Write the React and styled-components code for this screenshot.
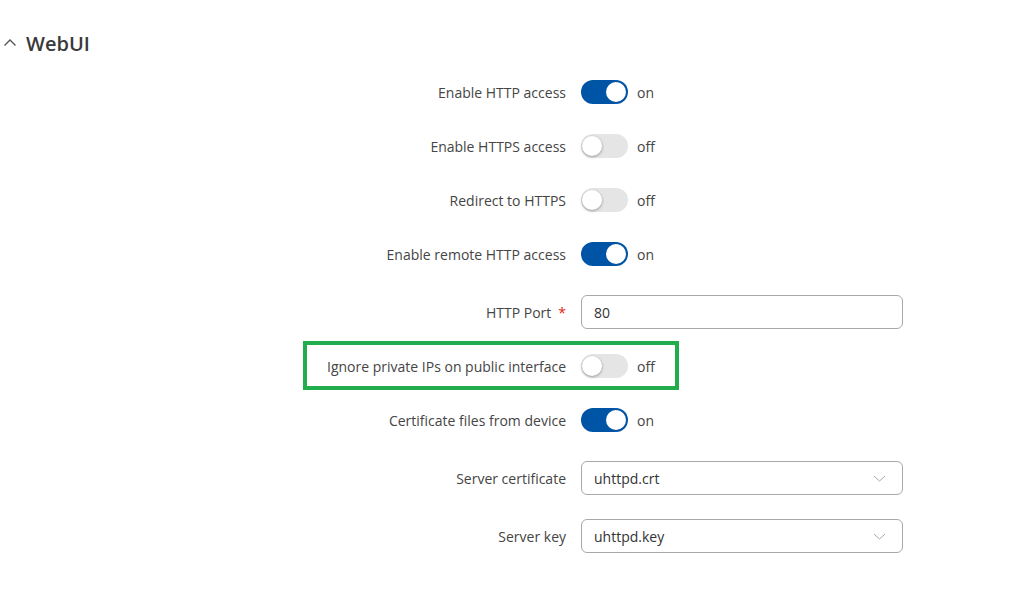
import React from "react";
import styled, { createGlobalStyle } from "styled-components";

const GlobalStyle = createGlobalStyle`
  html, body {
    margin: 0;
    padding: 0;
    background: #ffffff;
  }
  body {
    font-family: "Open Sans", "Noto Sans", sans-serif;
    color: #404040;
  }
`;

const rows = [
  { type: "toggle", label: "Enable HTTP access", on: true, space: 25 },
  { type: "toggle", label: "Enable HTTPS access", on: false, space: 30 },
  { type: "toggle", label: "Redirect to HTTPS", on: false, space: 30 },
  { type: "toggle", label: "Enable remote HTTP access", on: true, space: 30 },
  { type: "input", label: "HTTP Port", value: "80", required: true, space: 29 },
  { type: "toggle", label: "Ignore private IPs on public interface", on: false, space: 25, marked: true },
  { type: "toggle", label: "Certificate files from device", on: true, space: 30 },
  { type: "select", label: "Server certificate", value: "uhttpd.crt", space: 29 },
  { type: "select", label: "Server key", value: "uhttpd.key", space: 24 },
];

const App = () => {
  return (
    <>
      <GlobalStyle />
      <Page>
        <Header>
          <svg width="14" height="9" viewBox="0 0 14 9">
            <polyline points="1.5,7.5 7,2 12.5,7.5" fill="none" stroke="#555" strokeWidth="1.4" />
          </svg>
          <Title>WebUI</Title>
        </Header>
        <Form>
          {rows.map((r) => (
            <Row key={r.label} $space={r.space}>
              {r.marked && <Marker />}
              <Label>
                {r.label}
                {r.required && <Required>*</Required>}
              </Label>
              <Control>
                {r.type === "toggle" && (
                  <>
                    <Switch $on={r.on}>
                      <Knob $on={r.on} />
                    </Switch>
                    <State>{r.on ? "on" : "off"}</State>
                  </>
                )}
                {r.type === "input" && <Field>{r.value}</Field>}
                {r.type === "select" && (
                  <Field>
                    {r.value}
                    <svg width="13" height="7" viewBox="0 0 13 7">
                      <polyline points="1,1 6.5,6 12,1" fill="none" stroke="#a8a8a8" strokeWidth="1" />
                    </svg>
                  </Field>
                )}
              </Control>
            </Row>
          ))}
        </Form>
      </Page>
    </>
  );
};

const Page = styled.div`
  width: 1035px;
  height: 602px;
  overflow: hidden;
  padding-top: 31px;
  box-sizing: border-box;
`;

const Header = styled.div`
  display: flex;
  align-items: center;
  gap: 9px;
  padding-left: 3px;
  height: 24px;
  svg {
    margin-top: -2px;
  }
`;

const Title = styled.h2`
  margin: 0;
  font-size: 20px;
  font-weight: 600;
  color: #3a3a3a;
`;

const Form = styled.div`
  display: flex;
  flex-direction: column;
`;

const Row = styled.div`
  position: relative;
  display: grid;
  grid-template-columns: 566px 322px;
  column-gap: 15px;
  align-items: center;
  margin-top: ${(p) => p.$space}px;
`;

const Marker = styled.div`
  position: absolute;
  left: 303px;
  top: -13px;
  width: 376px;
  height: 49px;
  border: 4px solid #21ad4b;
  box-sizing: border-box;
  pointer-events: none;
`;

const Label = styled.label`
  text-align: right;
  font-size: 14px;
  color: #454545;
  white-space: nowrap;
`;

const Required = styled.span`
  color: #e2231a;
  margin-left: 7px;
`;

const Control = styled.div`
  display: flex;
  align-items: center;
  gap: 9px;
`;

const Switch = styled.div`
  position: relative;
  width: 47px;
  height: 24px;
  border-radius: 12px;
  background: ${(p) => (p.$on ? "#0054a6" : "#e5e5e5")};
  flex-shrink: 0;
`;

const Knob = styled.div`
  position: absolute;
  top: 2px;
  left: ${(p) => (p.$on ? "25px" : "1px")};
  width: 20px;
  height: 20px;
  border-radius: 50%;
  background: #ffffff;
  box-shadow: ${(p) => (p.$on ? "none" : "0 1px 3px rgba(0,0,0,0.35)")};
`;

const State = styled.span`
  font-size: 14px;
  color: #454545;
`;

const Field = styled.div`
  box-sizing: border-box;
  width: 322px;
  height: 34px;
  border: 1px solid #a9a9a9;
  border-radius: 6px;
  padding: 0 16px 0 12px;
  display: flex;
  align-items: center;
  justify-content: space-between;
  font-size: 14px;
  color: #333;
`;

export default App;
